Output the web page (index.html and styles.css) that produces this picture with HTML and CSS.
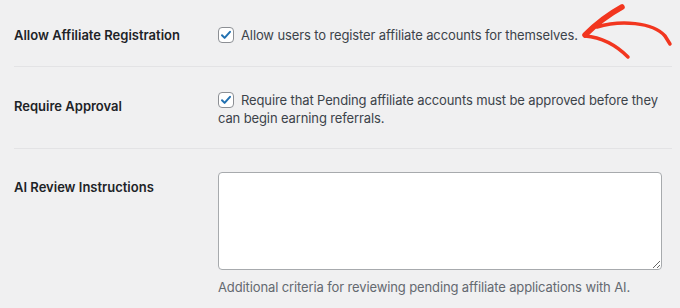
FILE: index.html
```html
<!DOCTYPE html>
<html lang="en">

<head>
    <meta charset="UTF-8">
    <meta name="viewport" content="width=device-width, initial-scale=1.0">
    <title>Affiliate Settings</title>
    <link rel="stylesheet" href="styles.css">
</head>

<body>
    <div class="settings">
        <div class="row row-first">
            <div class="label">Allow Affiliate Registration</div>
            <div class="field">
                <label class="check-line">
                    <span class="check"><svg viewBox="0 0 16 16" width="16" height="16"><path d="M4 8.2l2.6 2.7L12 4.8" fill="none" stroke="#2271b1" stroke-width="2" stroke-linecap="round" stroke-linejoin="round"/></svg></span>Allow users to register affiliate accounts for themselves.
                </label>
            </div>
        </div>
        <div class="row">
            <div class="label label-low">Require Approval</div>
            <div class="field">
                <label class="check-line">
                    <span class="check"><svg viewBox="0 0 16 16" width="16" height="16"><path d="M4 8.2l2.6 2.7L12 4.8" fill="none" stroke="#2271b1" stroke-width="2" stroke-linecap="round" stroke-linejoin="round"/></svg></span>Require that Pending affiliate accounts must be approved before they can begin earning referrals.
                </label>
            </div>
        </div>
        <div class="row row-last">
            <div class="label label-low">AI Review Instructions</div>
            <div class="field">
                <textarea class="review"></textarea>
                <p class="description">Additional criteria for reviewing pending affiliate applications with AI.</p>
            </div>
        </div>
    </div>

    <!-- hand drawn pointer -->
    <svg class="arrow" viewBox="0 0 105 65" width="105" height="65">
        <g fill="none" stroke="#f2361f" stroke-linecap="round" stroke-linejoin="round">
            <path d="M10 35 Q27 18 47 7" stroke-width="5.5" />
            <path d="M22 27 C45 20 78 22 90 36 L95 44" stroke-width="3.5" />
            <path d="M10 36 Q34 38 53 57" stroke-width="3.5" />
        </g>
    </svg>
</body>

</html>
```

FILE: styles.css
```css
* {
    margin: 0px;
    padding: 0px;
    box-sizing: border-box;
}

body {
    background: #f0f0f1;
    font-family: Inter, "Liberation Sans", sans-serif;
    font-size: 13px;
    line-height: 18px;
    color: #3c434a;
    width: 680px;
    height: 308px;
    overflow: hidden;
    position: relative;
}

.settings {
    margin: 0 8px 0 14px;
}

.row {
    display: grid;
    grid-template-columns: 204px 1fr;
    padding: 24px 0 21px;
    border-bottom: 1px solid #e3e3e5;
}

.row-first {
    padding: 26px 0 22px;
}

.row-last {
    border-bottom: none;
    padding-top: 23px;
}

.label {
    font-weight: 600;
    color: #1d2327;
}

.label-low {
    padding-top: 6px;
}

.field {
    letter-spacing: -0.12px;
}

.check-line {
    display: block;
}

.check {
    display: inline-block;
    width: 16px;
    height: 16px;
    margin-right: 7px;
    vertical-align: -3px;
    background: #fff;
    border: 1px solid #8c8f94;
    border-radius: 4px;
}

.check svg {
    display: block;
    margin: -1px;
}

.review {
    display: block;
    width: 444px;
    height: 98px;
    background: #fff;
    border: 1px solid #a7aaad;
    border-radius: 4px;
    font-family: inherit;
}

.description {
    margin-top: 8px;
    color: #646970;
}

.arrow {
    position: absolute;
    left: 575px;
    top: 0;
}
```
